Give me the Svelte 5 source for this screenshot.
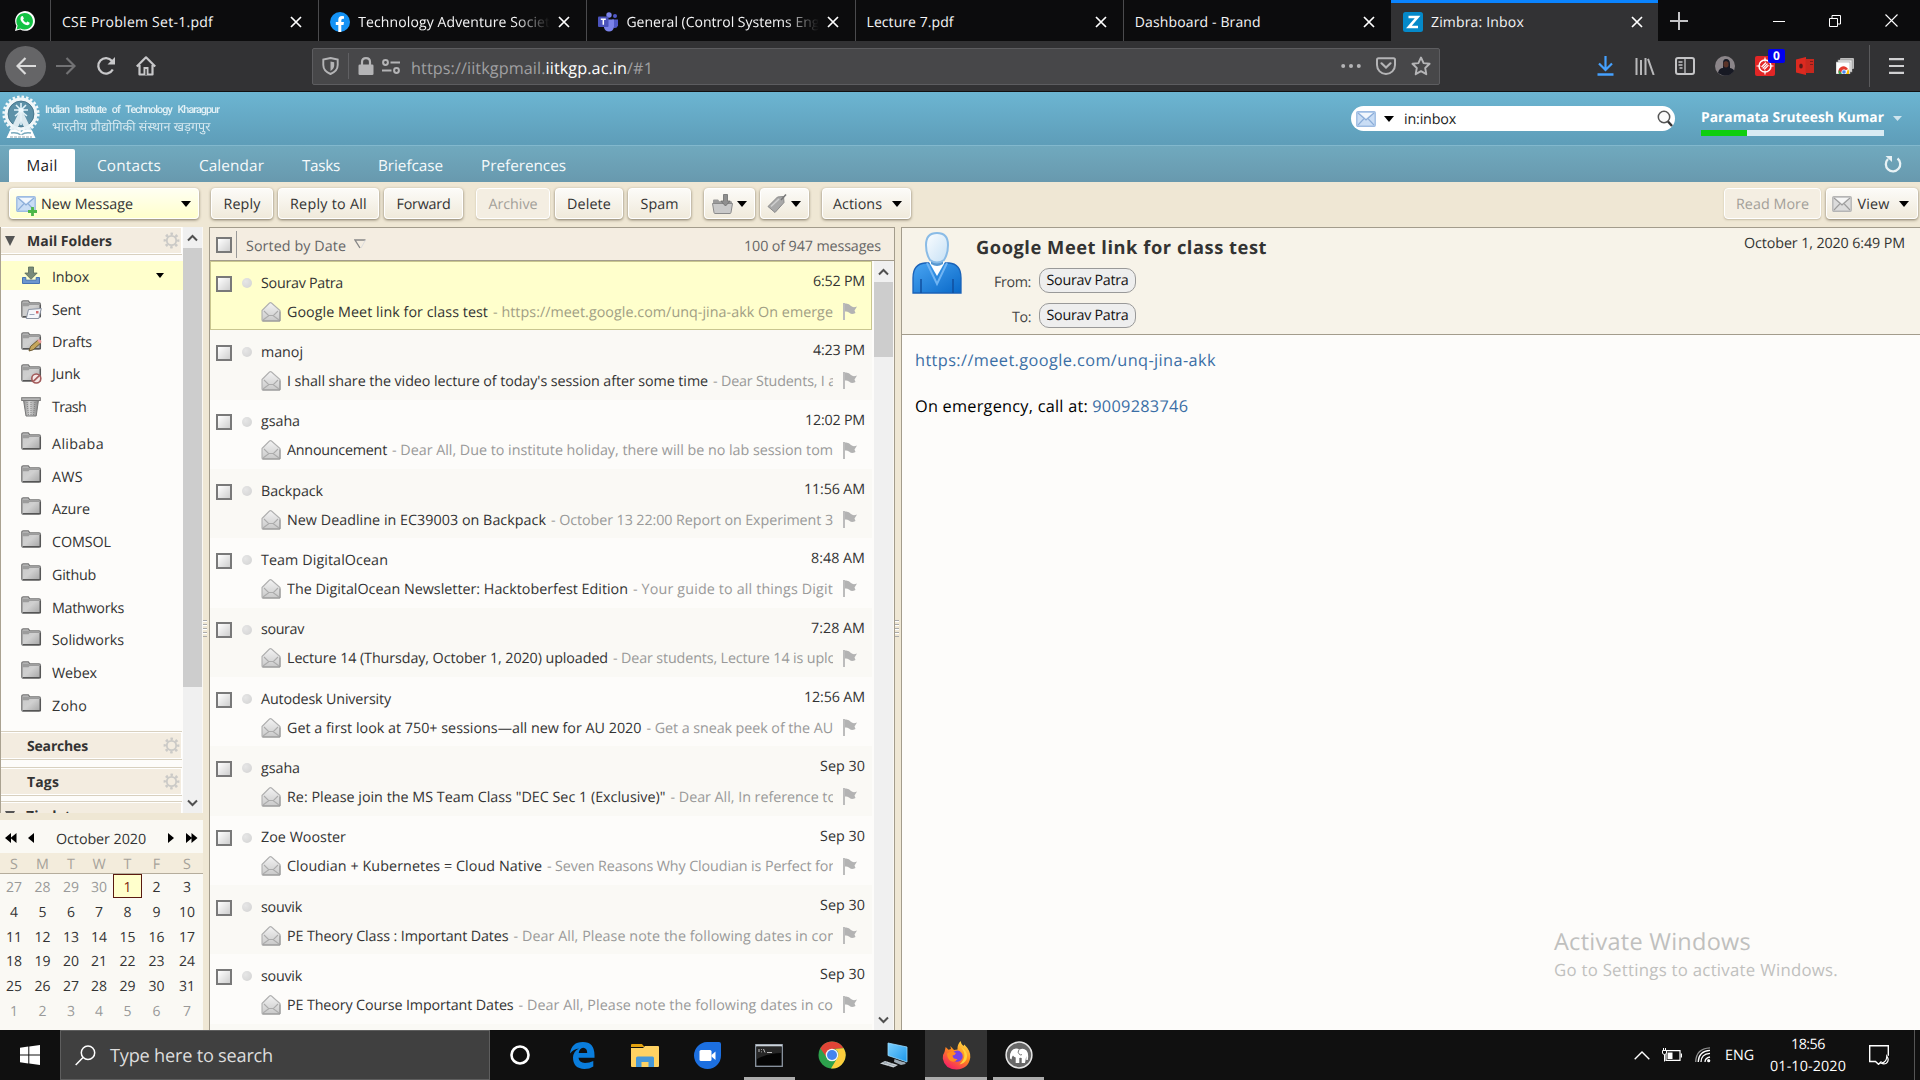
<script>
  // Spreads or tightens the letters of a label so that it fills a given width.
  function fit(node, width) {
    const range = document.createRange();
    range.selectNodeContents(node);
    const natural = range.getBoundingClientRect().width;
    const count = node.textContent.length;
    if (count) node.style.letterSpacing = `${(width - natural) / count}px`;
  }

  const tabs = [
    { title: 'CSE Problem Set-1.pdf', w: 151 },
    { title: 'Technology Adventure Societ', w: 192, icon: 'facebook', fade: true },
    { title: 'General (Control Systems Eng', w: 193, icon: 'teams', fade: true },
    { title: 'Lecture 7.pdf', w: 87 },
    { title: 'Dashboard - Brand', w: 126 },
    { title: 'Zimbra: Inbox', w: 93, icon: 'zimbra', active: true }
  ];
  const apps = [
    { t: 'Mail', w: 31, on: true, cls: 'a0' },
    { t: 'Contacts', w: 64, cls: 'a1' },
    { t: 'Calendar', w: 65, cls: 'a2' },
    { t: 'Tasks', w: 38, cls: 'a3' },
    { t: 'Briefcase', w: 65, cls: 'a4' },
    { t: 'Preferences', w: 85, cls: 'a5' }
  ];
  const systemFolders = [
    { t: 'Inbox', w: 37, icon: 'inbox', on: true },
    { t: 'Sent', w: 29, icon: 'sent' },
    { t: 'Drafts', w: 40, icon: 'drafts' },
    { t: 'Junk', w: 28, icon: 'junk' },
    { t: 'Trash', w: 34, icon: 'trash' }
  ];
  const userFolders = [
    ['Alibaba', 52], ['AWS', 31], ['Azure', 38], ['COMSOL', 59], ['Github', 44],
    ['Mathworks', 72], ['Solidworks', 72], ['Webex', 45], ['Zoho', 35]
  ];
  const messages = [
    { from: 'Sourav Patra', fw: 82, time: '6:52 PM', tw: 52, s: 'Google Meet link for class test', w: 201, x: '- https://meet.google.com/unq-jina-akk On emerge', e: 0 },
    { from: 'manoj', fw: 42, time: '4:23 PM', tw: 52, s: "I shall share the video lecture of today's session after some time", w: 421, x: '- Dear Students, I a', e: 3 },
    { from: 'gsaha', fw: 39, time: '12:02 PM', tw: 60, s: 'Announcement', w: 100, x: '- Dear All, Due to institute holiday, there will be no lab session tom', e: 0 },
    { from: 'Backpack', fw: 62, time: '11:56 AM', tw: 61, s: 'New Deadline in EC39003 on Backpack', w: 259, x: '- October 13 22:00 Report on Experiment 3', e: 0 },
    { from: 'Team DigitalOcean', fw: 127, time: '8:48 AM', tw: 54, s: 'The DigitalOcean Newsletter: Hacktoberfest Edition', w: 341, x: '- Your guide to all things Digit', e: 0 },
    { from: 'sourav', fw: 43, time: '7:28 AM', tw: 54, s: 'Lecture 14 (Thursday, October 1, 2020) uploaded', w: 321, x: '- Dear students, Lecture 14 is uplo', e: 3 },
    { from: 'Autodesk University', fw: 130, time: '12:56 AM', tw: 61, s: 'Get a first look at 750+ sessions—all new for AU 2020', w: 354.5, x: '- Get a sneak peek of the AU', e: 0 },
    { from: 'gsaha', fw: 39, time: 'Sep 30', tw: 45, s: 'Re: Please join the MS Team Class "DEC Sec 1 (Exclusive)"', w: 378.5, x: '- Dear All, In reference to', e: 3 },
    { from: 'Zoe Wooster', fw: 85, time: 'Sep 30', tw: 45, s: 'Cloudian + Kubernetes = Cloud Native', w: 255, x: '- Seven Reasons Why Cloudian is Perfect for', e: 1 },
    { from: 'souvik', fw: 41, time: 'Sep 30', tw: 45, s: 'PE Theory Class : Important Dates', w: 221.5, x: '- Dear All, Please note the following dates in con', e: 3 },
    { from: 'souvik', fw: 41, time: 'Sep 30', tw: 45, s: 'PE Theory Course Important Dates', w: 226.5, x: '- Dear All, Please note the following dates in co', e: 0 }
  ];
  const weekdays = ['S', 'M', 'T', 'W', 'T', 'F', 'S'];
  const days = Array.from({ length: 42 }, (_, i) => {
    const d = i - 3;
    return { n: d < 1 ? d + 30 : d > 31 ? d - 31 : d, dim: d < 1 || d > 31, today: d === 1 };
  });
</script>

{#snippet cross()}
  <svg class="cross" width="12" height="12" viewBox="0 0 12 12"><path d="M1 1l10 10M11 1L1 11" stroke="#fff" stroke-width="1.7" /></svg>
{/snippet}

{#snippet caret()}
  <svg width="10" height="6" viewBox="0 0 10 6"><path d="M0 0h10L5 6z" fill="#000" /></svg>
{/snippet}

{#snippet mail(tone)}
  <svg width="20" height="16" viewBox="0 0 20 16">
    <rect x=".8" y=".8" width="18.4" height="14.4" rx="1" fill={tone === 'blue' ? '#c9ddf5' : '#dcdcdc'} stroke={tone === 'blue' ? '#9dbbe2' : '#b5b5b5'} stroke-width="1.4" />
    <path d="M2 2l8 7 8-7M2 14l5.7-6M18 14l-5.7-6" fill="none" stroke={tone === 'blue' ? '#8badd8' : '#9d9d9d'} stroke-width="1.1" />
    <path d="M3.4 2h13.2L10 7.6z" fill="#fff" opacity=".75" />
  </svg>
{/snippet}

{#snippet gear()}
  <svg class="gear" width="17" height="17" viewBox="-8.5 -8.5 17 17">
    <circle r="4.7" fill="none" stroke="#cbcac7" stroke-width="1.8" />
    <circle r="6.6" fill="none" stroke="#cbcac7" stroke-width="2.6" stroke-dasharray="2.5 2.684" stroke-dashoffset="1.25" />
  </svg>
{/snippet}

{#snippet chevron(up)}
  <svg width="11" height="8" viewBox="0 0 11 8"><path d={up ? 'M1 6.5l4.5-4.5L10 6.5' : 'M1 1.5L5.500 6 10 1.5'} fill="none" stroke="#505050" stroke-width="2" /></svg>
{/snippet}

{#snippet folderBase()}
  <path d="M.8 2.300q0-1.500 1.500-1.500h5l1.500 2H18q1.400 0 1.400 1.400v11.600q0 1.400-1.400 1.400H2.200Q.8 17.200.8 15.800z" fill="url(#folderFill)" stroke="#777" stroke-width="1.300" />
  <path d="M1.500 2.500h6l1.300 1.300h10v1.200H8.500l-1 1.300h-6z" fill="#9c9c9c" />
  <path d="M19.300 5v11.700H2" fill="none" stroke="#555" stroke-width="1.300" />
{/snippet}

{#snippet folderIcon(kind)}
  <svg width="21" height="20" viewBox="0 0 21 20">
    {#if kind === 'inbox'}
      <path d="M1.500 11.500v6h17v-6h-3.300v2.700H4.800v-2.700z" fill="#6b96cf" stroke="#4673b3" />
      <path d="M7.500 1h5v6h3.700L10 13.300 3.800 7h3.700z" fill="#788a7a" stroke="#58695b" stroke-width=".8" />
    {:else if kind === 'trash'}
      <path d="M2.500 3h15l-2.300 16H5z" fill="url(#binFill)" stroke="#777" />
      <path d="M6 5l1.500 13M10 5v13M14 5l-1.500 13" stroke="#747474" stroke-width=".8" stroke-dasharray="1 1" />
      <rect x=".7" y=".7" width="18.600" height="2.800" fill="#b5b5b5" stroke="#777" />
    {:else}
      {@render folderBase()}
      {#if kind === 'sent'}
        <path d="M7.500 9.500l12.800-1-2.500 10H5.300z" fill="#f4f6fa" stroke="#8b93a3" />
        <path d="M8.500 14.500h5" stroke="#9aa5bb" /><rect x="15" y="11" width="2.500" height="2.500" fill="#d36c6c" />
      {:else if kind === 'drafts'}
        <path d="M8 19l1.500-4.500L17 8l3 2.800-7.800 7z" fill="#c5a65c" stroke="#6b5830" />
        <path d="M16.300 8.600l1.500-1.300q2.800.6 2.700 3l-1.400 1.300z" fill="#e99b9b" />
      {:else if kind === 'junk'}
        <circle cx="15.300" cy="14.500" r="4.500" fill="#f5e8e7" stroke="#a35959" stroke-width="1.600" />
        <path d="M12.300 17.400l6-5.800" stroke="#a35959" stroke-width="1.600" />
      {/if}
    {/if}
  </svg>
{/snippet}

<svg class="defs" width="0" height="0">
  <defs>
    <linearGradient id="folderFill" x1="0" y1="0" x2="1" y2="1"><stop offset="0" stop-color="#c8c8c8" /><stop offset=".5" stop-color="#d0d0d0" /><stop offset="1" stop-color="#a4a4a4" /></linearGradient>
    <linearGradient id="binFill"><stop offset="0" stop-color="#8e8e8e" /><stop offset=".4" stop-color="#d2d2d2" /><stop offset="1" stop-color="#858585" /></linearGradient>
    <linearGradient id="openFill" x1="0" y1="0" x2="0" y2="1"><stop offset="0" stop-color="#f3f3f3" /><stop offset="1" stop-color="#c9c9c9" /></linearGradient>
    <linearGradient id="headFill" x1="0" y1="0" x2="1" y2="1"><stop offset="0" stop-color="#fbfdff" /><stop offset="1" stop-color="#c5e0f5" /></linearGradient>
    <linearGradient id="coatFill" x1="0" y1="0" x2="1" y2="1"><stop offset="0" stop-color="#4aa5f2" /><stop offset="1" stop-color="#0868c8" /></linearGradient>
    <linearGradient id="foxFill" x1=".8" y1="0" x2=".2" y2="1"><stop offset="0" stop-color="#ffe14a" /><stop offset=".45" stop-color="#ff8a1c" /><stop offset="1" stop-color="#f5156c" /></linearGradient>
    <linearGradient id="screenFill" x1="0" y1="0" x2="1" y2="1"><stop offset="0" stop-color="#7cd0ff" /><stop offset="1" stop-color="#1c97ea" /></linearGradient>
  </defs>
</svg>

<div class="screen">
  <header class="tabstrip">
    <div class="pinned">
      <svg width="20" height="20" viewBox="0 0 20 20"><path d="M0 20l1.400-5.200A9.900 9.900 0 1 1 5.200 18.600z" fill="#fff" /><path d="M1.600 18.400l1-3.700a8.300 8.300 0 1 1 2.900 2.800z" fill="#12c243" /><path d="M6.500 5.200l1.300-.1 1.100 2.500-.9 1.200q1 2 3.200 2.900l1.200-1.200 2.300 1.200q.2 2.300-2.300 2.500-4.300-.2-6.800-5.200-.6-2.500.9-3.800z" fill="#fff" /></svg>
    </div>
    {#each tabs as tab}
      <div class="tab" class:active={tab.active}>
        {#if tab.icon === 'facebook'}
          <svg width="20" height="20" viewBox="0 0 20 20"><circle cx="10" cy="10" r="10" fill="#1492f5" /><path d="M8.300 20v-7H5.800v-3h2.500V7.800Q8.300 4 12 4q1.200 0 2 .2v2.500h-1.200q-1.500 0-1.500 1.500V10H14l-.5 3h-2.200v7z" fill="#fff" /></svg>
        {:else if tab.icon === 'teams'}
          <svg width="20" height="20" viewBox="0 0 20 20"><circle cx="11" cy="3" r="2.700" fill="#7b83eb" /><circle cx="17" cy="4" r="2" fill="#5059c9" /><path d="M14 7.500h6v6q-1 3-4 2.500z" fill="#5059c9" /><path d="M7 7.500h9v7.500q-1 4.500-5 4.500t-5-4z" fill="#7b83eb" /><rect y="4.500" width="10.500" height="10.500" rx="1" fill="#4b53bc" /><path d="M2.800 7.300h5M5.300 7.300v5.500" stroke="#fff" stroke-width="1.500" /></svg>
        {:else if tab.icon === 'zimbra'}
          <svg width="20" height="20" viewBox="0 0 20 20"><rect width="20" height="20" rx="2.500" fill="#0589c9" /><path d="M5.500 5h9L6 15h9" fill="none" stroke="#fff" stroke-width="2.700" /></svg>
        {/if}
        <span class="title" class:fade={tab.fade}><span use:fit={tab.w}>{tab.title}</span></span>
        {@render cross()}
      </div>
    {/each}
    <div class="newtab"><svg width="18" height="18" viewBox="0 0 18 18"><path d="M9 0v18M0 9h18" stroke="#c4c4c6" stroke-width="2" /></svg></div>
    <div class="winctl">
      <svg width="12" height="12" viewBox="0 0 12 12"><path d="M0 6.500h12" stroke="#fff" /></svg>
      <svg width="12" height="12" viewBox="0 0 12 12"><path d="M.5 3.500h8v8h-8zM3 3.500v-3h8.500V9H9" fill="none" stroke="#fff" /></svg>
      <svg width="13" height="13" viewBox="0 0 13 13"><path d="M.5.5l12 12M12.500.5l-12 12" stroke="#fff" stroke-width="1.100" /></svg>
    </div>
  </header>

  <nav class="navbar">
    <div class="navbtns">
      <span class="back"><svg width="20" height="18" viewBox="0 0 20 18"><path d="M20 9H2M9.500 1L1.500 9l8 8" fill="none" stroke="#dcdcdc" stroke-width="2.200" /></svg></span>
      <svg width="20" height="18" viewBox="0 0 20 18"><path d="M0 9h18M10.500 1l8 8-8 8" fill="none" stroke="#727274" stroke-width="2.200" /></svg>
      <svg width="20" height="20" viewBox="0 0 20 20"><path d="M16.800 13.500A7.700 7.700 0 1 1 16 5" fill="none" stroke="#c8c8ca" stroke-width="2.300" /><path d="M19 1v7.500h-7.500z" fill="#c8c8ca" /></svg>
      <svg width="20" height="20" viewBox="0 0 20 20"><path d="M.8 10.500L10 1.300l9.200 9.200M3.500 9v9.500h13V9" fill="none" stroke="#c8c8ca" stroke-width="2.200" stroke-linejoin="round" /><path d="M7.500 19v-8h5v8z" fill="#c8c8ca" /><path d="M9.300 13h1.500v6H9.300z" fill="#444" /></svg>
    </div>
    <div class="urlbar">
      <svg class="shield" width="17" height="18" viewBox="0 0 17 18"><path d="M8.500 1L15.700 2.500V8q0 6-7.200 9-7.200-3-7.200-9V2.500z" fill="none" stroke="#b4b4b6" stroke-width="1.900" /><path d="M8.500 4.500l3.700.8V8.500q0 3.300-3.700 5.500z" fill="#b4b4b6" /></svg>
      <i class="vline"></i>
      <svg class="lock" width="16" height="18" viewBox="0 0 16 18"><path d="M4 8V5q0-3.800 4-3.800T12 5v3" fill="none" stroke="#b4b4b6" stroke-width="2.200" /><rect x=".5" y="7.500" width="15" height="10.500" rx="1.300" fill="#b4b4b6" /></svg>
      <svg class="perm" width="18" height="15" viewBox="0 0 18 15"><g fill="none" stroke="#b4b4b6" stroke-width="2"><circle cx="3.500" cy="3.500" r="2.400" /><circle cx="14.500" cy="11.500" r="2.400" /><path d="M8.500 3.500H18M0 11.500h9.500" /></g></svg>
      <span class="url"><span use:fit={242}>https://iitkgpmail.<b>iitkgp.ac.in</b>/#1</span></span>
      <svg class="dots" width="20" height="4" viewBox="0 0 20 4"><g fill="#b4b4b6"><circle cx="2.200" cy="2" r="2" /><circle cx="10" cy="2" r="2" /><circle cx="17.800" cy="2" r="2" /></g></svg>
      <svg class="pocket" width="20" height="18" viewBox="0 0 20 18"><path d="M2.500 1.200h15q1.500 0 1.500 1.500V8a9 9 0 0 1-18 0V2.700q0-1.500 1.500-1.500z" fill="none" stroke="#b4b4b6" stroke-width="2" /><path d="M5.500 6.300l4.500 4.200 4.500-4.200" fill="none" stroke="#b4b4b6" stroke-width="2.200" stroke-linecap="round" /></svg>
      <svg class="star" width="20" height="20" viewBox="0 0 20 20"><path d="M10 1.500l2.600 5.600 6 .7-4.400 4.200 1.100 6.200-5.300-3-5.300 3L5.800 12 1.400 7.800l6-.7z" fill="none" stroke="#b4b4b6" stroke-width="1.900" stroke-linejoin="round" /></svg>
    </div>
    <div class="tools">
      <span><svg width="17" height="20" viewBox="0 0 17 20"><path d="M8.500 0v13M2 7.500l6.500 6.500L15 7.500" fill="none" stroke="#45a1ff" stroke-width="2.200" /><path d="M.5 18.500h16" stroke="#45a1ff" stroke-width="2.500" /></svg></span>
      <span><svg width="20" height="17" viewBox="0 0 20 17"><path d="M1.500 0v17M6 2v15M10.500 0v17M13 .8L18.700 17" stroke="#b8b8ba" stroke-width="2" /></svg></span>
      <span><svg width="20" height="18" viewBox="0 0 20 18"><rect x="1" y="1" width="18" height="16" rx="2" fill="none" stroke="#c4c4c6" stroke-width="2" /><path d="M10 1v16M3.500 5h4M3.500 8h4M4.500 11h3" stroke="#c4c4c6" stroke-width="1.300" /></svg></span>
      <span><svg width="20" height="20" viewBox="0 0 20 20"><circle cx="10" cy="10" r="10" fill="#8b8589" /><path d="M3 17q1-5 5-5V7q0-4 3-4 4 0 4 5v4q4 1 4 3-4 6-11 4.500z" fill="#171923" /><path d="M8.500 6.500q2.500-3 5 0v3.500q-2.500 3-5 0z" fill="#5a3328" /></svg></span>
      <span class="badged">
        <svg width="20" height="20" viewBox="0 0 20 20"><rect width="20" height="20" rx="2" fill="#e22626" /><g fill="none" stroke="#fff"><circle cx="10" cy="10" r="6" stroke-width="1.500" /><path d="M10 1.500v4M10 14.500v4M1.500 10h4M14.500 10h4M6.500 11l4.500-4.500M7.700 12.500l4.800-4.800M9.200 13.500l4.300-4.300" stroke-width="1.200" /></g></svg>
        <b class="badge">0</b>
      </span>
      <span><svg width="18" height="18" viewBox="0 0 18 18"><path d="M0 2.500L10 0v18L0 15.500z" fill="#dc2a20" /><path d="M9.500 2H18v14H9.500z" fill="#c8281e" /><ellipse cx="5" cy="9" rx="1.800" ry="2.600" fill="#5b1a18" /><path d="M14 4.500h3M14 7.500h3" stroke="#7a1f1c" /></svg></span>
      <span><svg width="18" height="16" viewBox="0 0 18 16"><rect x="4" y="0" width="14" height="11" rx="1" fill="#bcbcbc" /><rect x="2" y="2" width="14" height="12" fill="#eee" stroke="#888" stroke-width=".6" /><rect y="4" width="14" height="12" fill="#fff" stroke="#999" stroke-width=".6" /><path d="M3 16a5 5 0 0 1 9-5z" fill="#e33b2e" /><path d="M3 16q-1-2 0-4l3 4z" fill="#2da94f" /><path d="M12 11q2 2 1 5h-3z" fill="#fdbd00" /><circle cx="8" cy="14" r="2.200" fill="#4587f3" stroke="#fff" stroke-width=".8" /></svg></span>
    </div>
    <div class="menu"><svg width="15" height="16" viewBox="0 0 15 16"><path d="M0 1.200h15M0 8h15M0 14.800h15" stroke="#d0d0d2" stroke-width="2.200" /></svg></div>
  </nav>

  <section class="banner">
    <div class="brand">
      <svg width="38" height="44" viewBox="0 0 38 44">
        <circle cx="19" cy="19" r="14.700" fill="#5d91a8" stroke="#f1f7f9" stroke-width="3.400" />
        <circle cx="19" cy="19" r="17.300" fill="none" stroke="#f1f7f9" stroke-width="2.600" stroke-dasharray="2.500 2.030" />
        <circle cx="19" cy="19" r="12.900" fill="none" stroke="#49788e" />
        <path d="M19 8v22M14 10l5 5 5-5M12 15h14M13 21l6-5 6 5" fill="none" stroke="#e4f4fa" stroke-width="1.600" />
        <circle cx="19" cy="15.500" r="2.600" fill="#eef9fd" />
        <path d="M17 17L7.500 37h6L19 26l5.500 11h6L21 17z" fill="#e6f1f5" opacity=".92" />
        <path d="M4.500 43l3.500-7.500q7-2 11 1.500 4-3.500 11-1.500l3.500 7.500z" fill="#fff" />
        <path d="M9 38q6-1 9.500 1.800M29 38q-6-1-9.500 1.800" fill="none" stroke="#7aa9bc" stroke-width="1.400" />
        <path d="M8 42h22" stroke="#8da2ab" stroke-dasharray="3 1" />
      </svg>
      <div class="names">
        <span class="en"><span use:fit={174}>Indian Institute of Technology Kharagpur</span></span>
        <span class="hi"><span use:fit={160}>भारतीय प्रौद्योगिकी संस्थान खड़गपुर</span></span>
      </div>
    </div>
    <div class="search">
      {@render mail('blue')}
      <svg class="sc" width="10" height="6" viewBox="0 0 10 6"><path d="M0 0h10L5 6z" /></svg>
      <span class="q"><span use:fit={52}>in:inbox</span></span>
      <svg class="mag" width="16" height="17" viewBox="0 0 16 17"><circle cx="7" cy="7" r="5.700" fill="#fafafa" stroke="#555" stroke-width="1.500" /><path d="M11 11.500l4 4.500" stroke="#333" stroke-width="2.400" /></svg>
    </div>
    <div class="user">
      <div class="uname"><b use:fit={183}>Paramata Sruteesh Kumar</b></div>
      <div class="quota"><i></i></div>
    </div>
    <svg class="ucaret" width="9" height="5" viewBox="0 0 9 5"><path d="M0 0h9L4.500 5z" fill="#cfe5ee" /></svg>
  </section>

  <section class="apps">
    {#each apps as a}
      <span class="app {a.cls}" class:on={a.on}><span use:fit={a.w}>{a.t}</span></span>
    {/each}
    <svg class="refresh" width="18" height="18" viewBox="0 0 18 18"><path d="M13.500 3.500A7.200 7.200 0 1 1 4 4" fill="none" stroke="#e8f2f5" stroke-width="2.300" /><path d="M1.500 1h6.500v6z" fill="#e8f2f5" /></svg>
  </section>

  <section class="toolbar">
    <div class="btn new">
      <span class="newicon">{@render mail('blue')}<svg class="plus" width="9" height="9" viewBox="0 0 9 9"><path d="M4.500 0v9M0 4.500h9" stroke="#4db848" stroke-width="2.800" /></svg></span>
      <span class="lbl"><span use:fit={92}>New Message</span></span>{@render caret()}
    </div>
    <div class="btn b1"><span use:fit={37}>Reply</span></div>
    <div class="btn b2"><span use:fit={77}>Reply to All</span></div>
    <div class="btn b3"><span use:fit={54}>Forward</span></div>
    <div class="btn b4 off"><span use:fit={49}>Archive</span></div>
    <div class="btn b5"><span use:fit={44}>Delete</span></div>
    <div class="btn b6"><span use:fit={38}>Spam</span></div>
    <div class="btn b7">
      <svg width="21" height="20" viewBox="0 0 21 20"><path d="M1 9V6.500q0-1 1-1h4l1.500 1.700H19q1 0 1 1V9z" fill="#9a9a9a" /><path d="M.5 9.500h20L19 18.500q-.2 1-1 1H3q-.8 0-1-1z" fill="#c9c9c9" stroke="#8a8a8a" /><path d="M11.500.5h4V7h2.700l-4.700 5L8.800 7h2.700z" fill="#8f8f8f" stroke="#6d6d6d" stroke-width=".8" /></svg>
      {@render caret()}
    </div>
    <div class="btn b8">
      <svg width="20" height="20" viewBox="0 0 20 20"><path d="M1 12.500L10.500 3l6-.5.5 6L8 18.500z" fill="#a9a9a9" stroke="#8a8a8a" /><path d="M4 12.500L12 5" stroke="#cfcfcf" stroke-width="1.500" /><path d="M14 6l5-5.500" stroke="#777" stroke-width="1.500" /></svg>
      {@render caret()}
    </div>
    <div class="btn b9"><span use:fit={49}>Actions</span>{@render caret()}</div>
    <div class="btn b10 off"><span use:fit={73}>Read More</span></div>
    <div class="btn b11">{@render mail('grey')}<span use:fit={32}>View</span>{@render caret()}</div>
  </section>

  <main class="work">
    <aside class="left">
      <div class="treewrap">
        <div class="tree">
          <div class="head first"><i class="tri"></i><b use:fit={85}>Mail Folders</b>{@render gear()}</div>
          <div class="folders">
            {#each systemFolders as f}
              <div class="folder" class:on={f.on}>
                {@render folderIcon(f.icon)}<span use:fit={f.w}>{f.t}</span>
                {#if f.on}<svg class="fcaret" width="8" height="5" viewBox="0 0 8 5"><path d="M0 0h8L4 5z" /></svg>{/if}
              </div>
            {/each}
            <div class="custom">
              {#each userFolders as [t, w]}
                <div class="folder user-folder">{@render folderIcon('plain')}<span use:fit={w}>{t}</span></div>
              {/each}
            </div>
          </div>
          <div class="head searches"><b use:fit={61}>Searches</b>{@render gear()}</div>
          <div class="head tags"><b use:fit={32}>Tags</b>{@render gear()}</div>
          <div class="head zimlets"><i class="tri"></i><b use:fit={52}>Zimlets</b></div>
        </div>
        <div class="bar"><span class="arr">{@render chevron(true)}</span><i class="thumb t1"></i><span class="arr end">{@render chevron(false)}</span></div>
      </div>
      <div class="cal">
        <div class="calhead">
          <svg width="12" height="10" viewBox="0 0 12 10"><path d="M6 0v10L0 5zM11.500 0v10l-6-5z" /></svg>
          <svg class="pm" width="6" height="10" viewBox="0 0 6 10"><path d="M6 0v10L0 5z" /></svg>
          <span class="month"><span use:fit={90}>October 2020</span></span>
          <svg class="nm" width="6" height="10" viewBox="0 0 6 10"><path d="M0 0v10l6-5z" /></svg>
          <svg width="12" height="10" viewBox="0 0 12 10"><path d="M0 0v10l6-5zM5.500 0v10l6-5z" /></svg>
        </div>
        <div class="grid wk">{#each weekdays as d}<span>{d}</span>{/each}</div>
        <div class="grid dates">{#each days as d}<span class:dim={d.dim} class:today={d.today}>{d.n}</span>{/each}</div>
      </div>
    </aside>
    <div class="sash"><i></i></div>

    <section class="list">
      <div class="listhead">
        <i class="cb"></i><i class="sep"></i>
        <span use:fit={100}>Sorted by Date</span>
        <svg width="12" height="10" viewBox="0 0 12 10"><path d="M11.500 1H1l5 8" fill="none" stroke="#888" stroke-width="1.400" /><path d="M7 9l4.500-8" stroke="#ddd" /></svg>
        <span class="count"><span use:fit={137}>100 of 947 messages</span></span>
      </div>
      <div class="listbody">
        <div class="rows">
          {#each messages as m, i}
            <div class="msg" class:sel={i === 0} class:odd={i % 2 === 1}>
              <div class="l1">
                <i class="cb"></i><i class="dot"></i>
                <span class="from"><span use:fit={m.fw}>{m.from}</span></span>
                <span class="time"><span use:fit={m.tw}>{m.time}</span></span>
              </div>
              <div class="l2">
                <svg width="20" height="20" viewBox="0 0 20 20"><path d="M1 8.500L8.500 1q1-.8 2 0L19 8.500V18q0 1-1 1H2q-1 0-1-1z" fill="url(#openFill)" stroke="#b0b0b0" stroke-width="1.100" /><path d="M3 9l4.500 4.500h5L17 9M2 18l6-4.500M18 18l-6-4.500" fill="none" stroke="#acacac" stroke-width="1.100" /><path d="M1.500 19h17.500V9.500" fill="none" stroke="#929292" /></svg>
                <span class="subj"><span use:fit={m.w}>{m.s}</span><em use:fit={541 - m.w + m.e}>{m.x}</em></span>
                <svg class="flag" width="16" height="19" viewBox="0 0 16 19"><path d="M1 1h2v17H1z" fill="#bcbcbc" /><path d="M3 1.500q4-.5 6 2.500 2 2 6 .5l-2.500 4 1 2.500Q9 13 7 10.500q-2-1.500-4-1z" fill="#b3b3b3" /></svg>
              </div>
            </div>
          {/each}
        </div>
        <div class="bar"><span class="arr">{@render chevron(true)}</span><i class="thumb t2"></i><span class="arr end">{@render chevron(false)}</span></div>
      </div>
    </section>
    <div class="sash"><i></i></div>

    <section class="reader">
      <div class="rhead">
        <svg class="person" width="50" height="62" viewBox="0 0 50 62">
          <path d="M1 61V46Q1 32 13 31l24 0q12 1 12 15v15z" fill="url(#coatFill)" stroke="#1a62b8" stroke-width="1.300" />
          <path d="M17 30l8 14 8-14z" fill="#fff" /><path d="M15 31l10 21 10-21" fill="none" stroke="#6fb4f3" stroke-width="2" />
          <path d="M9 61V47M41 61V47" stroke="#104f9e" stroke-width="1.500" />
          <path d="M19 26v6q6 4 12 0v-6z" fill="#5899d2" />
          <path d="M14 13Q14 1 25 1t11 12q0 9-4 15-7 5-14 0-4-6-4-15z" fill="url(#headFill)" stroke="#8abbe6" stroke-width="2" />
        </svg>
        <div class="fields">
          <h1><span use:fit={291}>Google Meet link for class test</span></h1>
          <div class="field"><label><span use:fit={37}>From:</span></label><span class="chip"><span use:fit={82}>Sourav Patra</span></span></div>
          <div class="field"><label><span use:fit={19}>To:</span></label><span class="chip"><span use:fit={82}>Sourav Patra</span></span></div>
        </div>
        <div class="date"><span use:fit={161}>October 1, 2020 6:49 PM</span></div>
      </div>
      <div class="rbody">
        <p><a href="#meet" use:fit={301}>https://meet.google.com/unq-jina-akk</a></p>
        <p><span use:fit={173}>On emergency, call at:</span> <a class="tel" href="#call" use:fit={96}>9009283746</a></p>
      </div>
      <div class="activate">
        <div class="a-big"><span use:fit={197}>Activate Windows</span></div>
        <div class="a-small"><span use:fit={284}>Go to Settings to activate Windows.</span></div>
      </div>
    </section>
  </main>

  <footer class="taskbar">
    <div class="start"><svg width="20" height="20" viewBox="0 0 20 20"><path d="M0 2.800L8.300 1.600v7.900H0zM9.300 1.400L20 0v9.500H9.300zM0 10.500h8.300v7.900L0 17.200zM9.300 10.500H20V20L9.300 18.600z" fill="#fff" /></svg></div>
    <div class="winsearch">
      <svg width="21" height="21" viewBox="0 0 21 21"><circle cx="13" cy="7.700" r="6.700" fill="none" stroke="#fff" stroke-width="1.500" /><path d="M8 12.500L.7 20" stroke="#fff" stroke-width="1.500" /></svg>
      <span use:fit={163}>Type here to search</span>
    </div>
    <div class="pins">
      <span><svg width="20" height="20" viewBox="0 0 20 20"><circle cx="10" cy="10" r="8.500" fill="none" stroke="#fff" stroke-width="2.600" /></svg></span>
      <span><svg width="25" height="27" viewBox="0 0 25 27"><path d="M0 11.500Q1.500 0 12.800 0 24.500 0 24.500 13.300v2.400H8.500q.5 5 6.500 5.300 4.500 0 8.300-2v5.500Q19.500 27 14.500 27 3 26.500 3 15.500 3.500 9 9 6.500 3.500 7 0 11.500zM8.700 11h8.500q0-5-4-5.200Q9.500 6 8.700 11z" fill="#0a7ddc" /></svg></span>
      <span><svg width="28" height="23" viewBox="0 0 28 23"><path d="M0 1q0-1 1-1h10l2.500 3H0z" fill="#e2a10e" /><path d="M0 4h12l2-2h13q1 0 1 1v19q0 1-1 1H1q-1 0-1-1z" fill="#ffd262" /><path d="M5 23v-9q0-1.500 1.500-1.500h15Q23 12.500 23 14v9h-5.500v-5h-7v5z" fill="#4698d8" /></svg></span>
      <span><svg width="28" height="27" viewBox="0 0 28 27"><path d="M14 0h12q2 0 2 2v11.500A13.500 13.500 0 1 1 14 0z" fill="#1c6fe0" /><rect x="6.500" y="8" width="12" height="11" rx="1.500" fill="#fff" /><path d="M18.500 13l4-3.500v8.500l-4-3.500z" fill="#fff" /></svg></span>
      <span class="run wide"><svg width="28" height="23" viewBox="0 0 28 23"><rect x=".7" y=".7" width="26.600" height="21.600" fill="#050505" stroke="#8e98a4" stroke-width="1.300" /><path d="M1 1.500h26" stroke="#ccd3da" stroke-width="1.800" /><path d="M2 3h24v6Q14 9 2 15z" fill="#262626" /><path d="M4 5v3M6.500 5v.8M6.500 7.500v.8M8.500 5l1.500 3.500M12 8.500h5" stroke="#ccc" stroke-width=".9" /></svg></span>
      <span><svg width="28" height="28" viewBox="0 0 28 28"><circle cx="14" cy="14" r="13.500" fill="#2da14c" /><path d="M2.300 7.200a13.500 13.500 0 0 1 23.400 0L14 8a6 6 0 0 0-5.600 8z" fill="#e04436" /><path d="M25.700 7.200A13.500 13.500 0 0 1 13 27.500L19.300 17A6 6 0 0 0 17 8z" fill="#fccd3c" /><circle cx="14" cy="14" r="6.300" fill="#f4f4f4" /><circle cx="14" cy="14" r="5" fill="#4384ee" /></svg></span>
      <span><svg width="28" height="26" viewBox="0 0 28 26"><path d="M8 1l19 4v15L8 13.500z" fill="url(#screenFill)" stroke="#9adcff" stroke-width=".8" /><path d="M14.500 17l7 2.500 4 1v1.500l-4.500 1-7-3z" fill="#9eabb5" /><path d="M5 19l13 4-4.500 2.500L0 21.500z" fill="#ccd3d8" /><path d="M3 20.200l12.500 4M7.500 19.700l-4 2.500M12 21.200l-4 2.500" stroke="#8d98a0" stroke-width=".7" /></svg></span>
      <span class="run current"><svg width="29" height="29" viewBox="0 0 29 29"><path d="M2.500 11l1.200-5 2.800 2.800L9 8 8.300 5l3.700 4 3.500-.5Q15 4 18.500 0q.5 3 3 5l.8-1.500Q29 10 28.300 16.500 26.500 28 14.500 28.500 2.500 28 .8 17.500.6 13.500 2.500 11z" fill="url(#foxFill)" /><path d="M19 6q8 5 5.500 12.500-2 4-7 5 9-8 1.500-17.500z" fill="#ffd23c" /><path d="M10 12.500q3-4 7.500-2.500 4 2.500 3 7-2 4.500-7 3.500-5-2-3.500-8z" fill="#7542e5" /><path d="M5 12.500q4-3 9-.5-1 2.500-3.500 2.500.5 4 5 3.500-2.500 4-7 2-3.500-3-3.500-7.500z" fill="#ff8b21" /></svg></span>
      <span class="run wide"><svg width="28" height="28" viewBox="0 0 28 28"><circle cx="14" cy="14" r="12.900" fill="#686868" stroke="#e8e8e8" stroke-width="1.500" /><path d="M5 17.500Q4.500 8 11 7.500q2 0 3.500 1 4-2 7 1 2.500 3 1.300 9.500h-1.500v-4l-1.300 7h-3.300v-5q-1.500-.5-2.400 0v5h-3.600v-5.500q-2-.5-2.700-2-1.500 1.500-1.300 4z" fill="#fff" /><path d="M14 8.500q-2 3 .5 5 1.500 1 2.500 0" fill="none" stroke="#686868" stroke-width=".9" /></svg></span>
    </div>
    <div class="tray">
      <svg class="up" width="16" height="9" viewBox="0 0 16 9"><path d="M.7 8.300L8 1l7.300 7.300" fill="none" stroke="#fff" stroke-width="1.400" /></svg>
      <svg class="bat" width="20" height="14" viewBox="0 0 20 14"><path d="M4 2.700h14v9.600H4zM19.500 5.500v4" fill="none" stroke="#fff" stroke-width="1.200" /><path d="M5.500 4.500h5v6.500h-5z" fill="#fff" /><path d="M.5 2.500h4V5q-.5 1.500-2 1.500T.5 5zM1.500 0v2.500M3.500 0v2.500M2.500 6.500v7" fill="#101010" stroke="#fff" /></svg>
      <svg class="wifi" width="17" height="16" viewBox="0 0 17 16"><g fill="none" stroke="#fff" stroke-width="1.300"><path d="M10 15q0-4 5-5M6 15q0-8 9-8.700M3.200 15Q3.500 4 15 3.300" /><path d="M.7 15Q1 1.500 15 .8" opacity=".55" /></g><circle cx="13.700" cy="13.700" r="1.600" fill="#fff" /></svg>
      <span class="eng"><span use:fit={29}>ENG</span></span>
      <div class="clock"><div><span use:fit={34}>18:56</span></div><div><span use:fit={76}>01-10-2020</span></div></div>
      <svg class="note" width="21" height="20" viewBox="0 0 21 20"><path d="M12.500 16.500L9.500 19.300 6.500 16.500H.7V.7h18.600v10" fill="none" stroke="#fff" stroke-width="1.400" /><path d="M17.800 11q3 4.500-.5 7.200-2.300 1.300-5 0 5.500-1 5.500-7.200z" fill="none" stroke="#fff" stroke-width="1.200" /></svg>
      <i class="peek"></i>
    </div>
  </footer>
</div>

<style>
  :global(body) { background: #efe7d4; overflow: hidden; }
  .screen, .screen :global(*) { box-sizing: border-box; }
  .screen { width: 1920px; height: 1080px; display: flex; flex-direction: column; font-family: "Open Sans", "Noto Sans", sans-serif; font-size: 14.3px; text-rendering: geometricPrecision; color: #333; white-space: nowrap; overflow: hidden; }
  .defs { position: absolute; }
  svg { flex: none; display: block; }
  i, em { font-style: normal; }

  .tabstrip { height: 41px; display: flex; background: #0c0c0d; color: #f5f5f6; flex: none; }
  .pinned { width: 50px; display: flex; align-items: center; justify-content: center; flex: none; }
  .tab { width: 268.200px; height: 41px; border-left: 1px solid #4b4b4d; display: flex; align-items: center; padding: 2px 16px 0 11px; gap: 8px; font-size: 14px; flex: none; }
  .tab.active { width: 267px; background: #323234; border-left: 0; padding-left: 12px; padding-right: 15px; box-shadow: inset 0 3px #0a84ff; }
  .title { flex: 1; min-width: 0; overflow: hidden; padding-top: 1px; }
  .fade { mask-image: linear-gradient(90deg, #000 82%, transparent 100%); }
  .newtab { width: 42px; display: flex; align-items: center; justify-content: center; }
  .winctl { margin-left: auto; display: flex; gap: 44px; padding-right: 22px; align-items: center; }

  .navbar { height: 51px; background: #323234; border-bottom: 1px solid #111; display: flex; align-items: center; flex: none; }
  .navbtns { width: 312px; display: flex; align-items: center; padding-left: 5px; gap: 20px; }
  .back { width: 41px; height: 41px; border-radius: 50%; background: #656567; display: flex; align-items: center; justify-content: center; margin-right: -10px; }
  .urlbar { width: 1128px; height: 37px; background: #474749; border: 1px solid #5d5d60; border-radius: 2px; display: flex; align-items: center; padding: 0 8px 0 9px; }
  .vline { width: 1px; height: 26px; background: #606063; margin: 0 9px; }
  .perm { margin: 0 11px 0 8px; }
  .url { font-size: 16.200px; color: #a0a0a2; flex: 1; padding-top: 3px; }
  .url b { font-weight: 400; color: #fff; }
  .pocket { margin: 0 15px; }
  .tools { margin-left: 145px; display: flex; }
  .tools > span { width: 40px; display: flex; justify-content: center; align-items: center; }
  .badged { position: relative; }
  .badge { position: absolute; left: 23px; top: -7px; width: 17px; height: 14px; background: #0000f0; color: #fff; border-radius: 2px; font-size: 12px; line-height: 14px; text-align: center; }
  .menu { border-left: 1px solid #5a5a5c; height: 42px; margin-left: 4px; padding-left: 19px; display: flex; align-items: center; }

  .banner { height: 53px; flex: none; background: linear-gradient(#6cb5d2, #5e9db8); display: flex; align-items: flex-start; }
  .brand { width: 1351px; display: flex; gap: 5px; padding: 3px 0 0 2px; }
  .names { display: flex; flex-direction: column; color: #f3fafc; padding-top: 6px; }
  .en { font-size: 10.800px; line-height: 18px; height: 17px; font-weight: 500; font-family: Roboto, sans-serif; word-spacing: 4px; opacity: .88; }
  .hi { font-size: 12.500px; line-height: 18px; padding-left: 7px; opacity: .8; }
  .search { width: 324px; height: 25px; margin-top: 14px; border-radius: 13px; background: #fff; display: flex; align-items: center; padding: 0 2px 0 5px; }
  .sc { margin: 0 10px 0 8px; }
  .q { flex: 1; color: #222; padding-top: 1px; }
  .user { width: 183px; margin-left: 26px; padding-top: 15px; color: #fff; }
  .uname { height: 23px; line-height: 22px; font-size: 13.800px; }
  .quota { height: 6px; background: #d9ebf3; display: flex; }
  .quota i { width: 25%; background: #0fce0f; }
  .ucaret { margin: 24px 0 0 9px; }

  .apps { height: 37px; flex: none; border-top: 1px solid #82b8cd; background: linear-gradient(#70a9be, #6899ae); display: flex; padding-left: 9px; position: relative; color: #f6fafb; font-size: 15.300px; align-items: flex-end; }
  .app { height: 33px; line-height: 35px; }
  .app.on { background: #fff; color: #222; width: 66px; text-align: center; border-radius: 2px 2px 0 0; }
  .a1 { margin-left: 22px; } .a2 { margin-left: 38px; } .a3 { margin-left: 38px; } .a4 { margin-left: 38px; } .a5 { margin-left: 38px; }
  .refresh { margin: 0 18px 9px auto; }

  .toolbar { height: 45px; flex: none; background: #efe7d4; display: flex; padding: 6px 2px 0 9px; align-items: flex-start; }
  .btn { height: 31px; border: 1px solid #fff; border-radius: 4px; background: linear-gradient(#fcfbf8, #f0eadb); box-shadow: 0 1px 3px rgba(70, 60, 40, .65); display: flex; align-items: center; justify-content: center; color: #333; flex: none; }
  .btn > span:not(.newicon) { padding-top: 1px; }
  .btn.new { width: 190px; background: linear-gradient(#fffff2, #ffffcc); padding: 0 7px 0 6px; justify-content: flex-start; }
  .newicon { position: relative; margin-right: 5px; }
  .plus { position: absolute; right: -1px; bottom: -4px; }
  .lbl { flex: 1; }
  .off { color: #a3a099; background: #f4eee2; box-shadow: 0 1px 2px rgba(120, 110, 80, .35); }
  .b1 { width: 62px; margin-left: 12px; } .b2 { width: 101px; margin-left: 5px; } .b3 { width: 79px; margin-left: 5px; }
  .b4 { width: 74px; margin-left: 13px; } .b5 { width: 68px; margin-left: 5px; } .b6 { width: 63px; margin-left: 5px; }
  .b7 { width: 51px; margin-left: 13px; gap: 4px; } .b8 { width: 49px; margin-left: 5px; gap: 4px; padding-right: 2px; }
  .b9 { width: 89px; margin-left: 13px; gap: 10px; padding-left: 2px; } .b10 { width: 97px; margin-left: auto; } .b11 { width: 92px; margin-left: 5px; gap: 8px; padding-right: 4px; }
  .b11 > span { margin-left: -2px; margin-right: 1px; }

  .work { height: 803px; display: flex; flex: none; background: #efe7d4; }
  .left { width: 203px; display: flex; flex-direction: column; }
  .treewrap { height: 586px; display: flex; overflow: hidden; }
  .tree { width: 183px; background: #fdfcfa; border-left: 1px solid #aaa291; overflow: hidden; }
  .head { height: 27px; background: #f3ece0; border: 1px solid #fff; box-shadow: 0 1px #d8d0bf, 0 -1px #d8d0bf; display: flex; align-items: center; padding-left: 26px; width: 182px; position: relative; margin-left: -1px; font-size: 14px; }
  .head b { padding-top: 1px; }
  .head.first { box-shadow: 0 1px #d8d0bf; }
  .head.first b { margin-left: 1px; }
  .gear { margin-left: auto; margin-right: 1px; }
  .tri { width: 0; border: 5.500px solid transparent; border-top: 10px solid #555; border-bottom: 0; margin: 0 11px 0 -22px; }
  .folders { height: 478px; padding-top: 7px; }
  .folder { height: 24px; display: flex; align-items: center; padding-left: 20px; gap: 10px; margin-top: 8.200px; font-size: 14.300px; }
  .folder span { padding-top: 1px; }
  .folder.on { height: 29px; background: #ffffcc; margin: 0 0 0 -1px; padding-left: 21px; width: 183px; }
  .folder.on span { padding-top: 4px; }
  .folder.on + .folder { margin-top: 8px; }
  .fcaret { margin-left: auto; margin-right: 19px; }
  .custom { padding-top: 4px; }
  .user-folder { margin-top: 8.750px; }
  .user-folder span { padding-top: 2px; }
  .user-folder :global(svg) { margin-top: -3px; }
  .tags { margin-top: 9px; }
  .zimlets { margin-top: 7px; }
  .bar { width: 20px; background: #f0f0f0; display: flex; flex-direction: column; border-right: 1px solid #faf8f4; }
  .arr { height: 21px; display: flex; align-items: center; justify-content: center; }
  .end { margin-top: auto; }
  .thumb { background: #cdcdcd; }
  .t1 { height: 439px; } .t2 { height: 75px; }
  .cal { margin-top: 7px; height: 210px; background: #faf9f4; }
  .calhead { height: 33px; display: flex; align-items: center; padding: 2px 5px 0 5px; }
  .pm { margin-left: 11px; }
  .month { flex: 1; text-align: center; padding-left: 0; padding-top: 3px; }
  .nm { margin-right: 12px; }
  .grid { display: grid; grid-template-columns: 28px 29px 28px 28px 29px 29px 32px; text-align: center; }
  .wk { height: 21px; line-height: 23px; background: #f3ecdc; border-bottom: 1px solid #b5ad9c; color: #a6a29a; }
  .dates { grid-auto-rows: 24.800px; line-height: 28px; font-size: 14px; }
  .dim { color: #999; }
  .today { background: #ffffcc; border: 1px solid #5a1a10; color: #7c2510; height: 24px; line-height: 25px; }
  .sash { width: 6px; display: flex; align-items: center; }
  .sash i { width: 4px; height: 17px; background: repeating-linear-gradient(#aaa 0 1px, #fff 1px 2px, #efe7d4 2px 4px); }

  .list { width: 686px; border: 1px solid #a39c8c; border-bottom: 0; background: #fdfcfa; display: flex; flex-direction: column; }
  .listhead { height: 33px; background: #f4ede1; border-bottom: 1px solid #a39c8c; display: flex; align-items: center; flex: none; padding: 1px 13px 0 6px; color: #666; }
  .listhead > span { padding-top: 3px; }
  .cb { width: 16px; height: 16px; border: 2px solid #797979; background: linear-gradient(135deg, #fff, #cfcfcf); flex: none; }
  .sep { width: 1px; height: 27px; background: #999; margin: 0 9px 0 4px; }
  .listhead > svg { margin: -1px 0 0 8px; }
  .count { margin-left: auto; }
  .listbody { flex: 1; min-height: 0; display: flex; justify-content: space-between; overflow: hidden; }
  .rows { width: 662px; background: #faf9f5; height: 800px; }
  .msg { height: 69.350px; background: #fdfcfa; padding: 8px 7px 0 6px; }
  .msg.odd { background: #faf9f5; }
  .msg.sel { background: #ffffcc; box-shadow: inset 0 0 0 1px #c9c690; }
  .l1, .l2 { display: flex; align-items: center; }
  .l1 { height: 26px; }
  .l1 .cb { margin-top: 3px; }
  .from { padding-top: 2px; }
  .dot { width: 10px; height: 10px; border-radius: 50%; background: radial-gradient(circle at 35% 35%, #e6e6e6, #d2d2d2); margin: 2px 9px 0 10px; }
  .time { margin-left: auto; padding-bottom: 1px; }
  .l2 { height: 33px; padding-left: 45px; }
  .subj { width: 546px; overflow: hidden; display: flex; gap: 5px; margin-left: 6px; flex: none; padding-top: 1px; }
  .subj span, .subj em { flex: none; }
  .subj em { color: #999; }
  .sel .subj em { color: #a19e84; }
  .flag { margin-left: 9px; }

  .reader { flex: 1; border: 1px solid #a39c8c; border-width: 1px 0 0 1px; background: #fdfcfa; display: flex; flex-direction: column; }
  .rhead { height: 107px; flex: none; background: #f7f3e9; border-bottom: 1px solid #a39c8c; display: flex; padding: 4px 15px 0 10px; }
  .person { width: 50px; }
  .fields { margin-left: 14px; }
  h1 { margin: 0 0 6px; font-size: 18.300px; line-height: 32px; height: 30px; font-weight: 700; }
  .field { height: 35px; display: flex; align-items: flex-start; }
  label { width: 55px; text-align: right; padding-top: 5px; color: #444; }
  .chip { margin-left: 8px; width: 97px; height: 25px; border: 1px solid #999; border-radius: 10px; background: #eee; color: #111; line-height: 24px; text-align: center; }
  .date { margin-left: auto; padding-top: 2px; }
  .rbody { padding: 13px 13px; font-size: 16.300px; color: #000; }
  p { margin: 0 0 22px; line-height: 24px; }
  a { color: #3a6ea5; text-decoration: none; }
  .activate { margin: auto 0 47px 652px; color: #c0c0be; }
  .a-big { font-size: 23.500px; line-height: 30px; height: 31px; }
  .a-small { font-size: 16.800px; line-height: 26px; }

  .taskbar { height: 50px; flex: none; background: #101010; display: flex; color: #fff; }
  .start { width: 60px; display: flex; align-items: center; justify-content: center; }
  .winsearch { width: 430px; background: #404040; border: 1px solid #5e5e5e; display: flex; align-items: center; gap: 14px; padding-left: 14px; font-size: 18.200px; color: #ddd; }
  .winsearch span { padding-top: 1px; }
  .pins { display: flex; margin-left: -1px; }
  .pins span { width: 62.300px; display: flex; align-items: center; justify-content: center; position: relative; }
  .pins .run { border-bottom: 3px solid #acacac; padding-top: 3px; }
  .pins .wide { margin: 0 5.500px; width: 51.300px; }
  .current { background: #333; }
  .tray { margin-left: auto; display: flex; align-items: center; height: 50px; }
  .bat { margin-left: 12px; } .wifi { margin-left: 13px; } .eng { margin-left: 13px; padding-top: 1px; }
  .clock { width: 92px; margin-left: 8px; text-align: center; line-height: 22.500px; padding-top: 2px; }
  .note { margin-left: 15px; }
  .peek { width: 6px; height: 50px; border-left: 1px solid #555; margin-left: 24px; }
</style>
